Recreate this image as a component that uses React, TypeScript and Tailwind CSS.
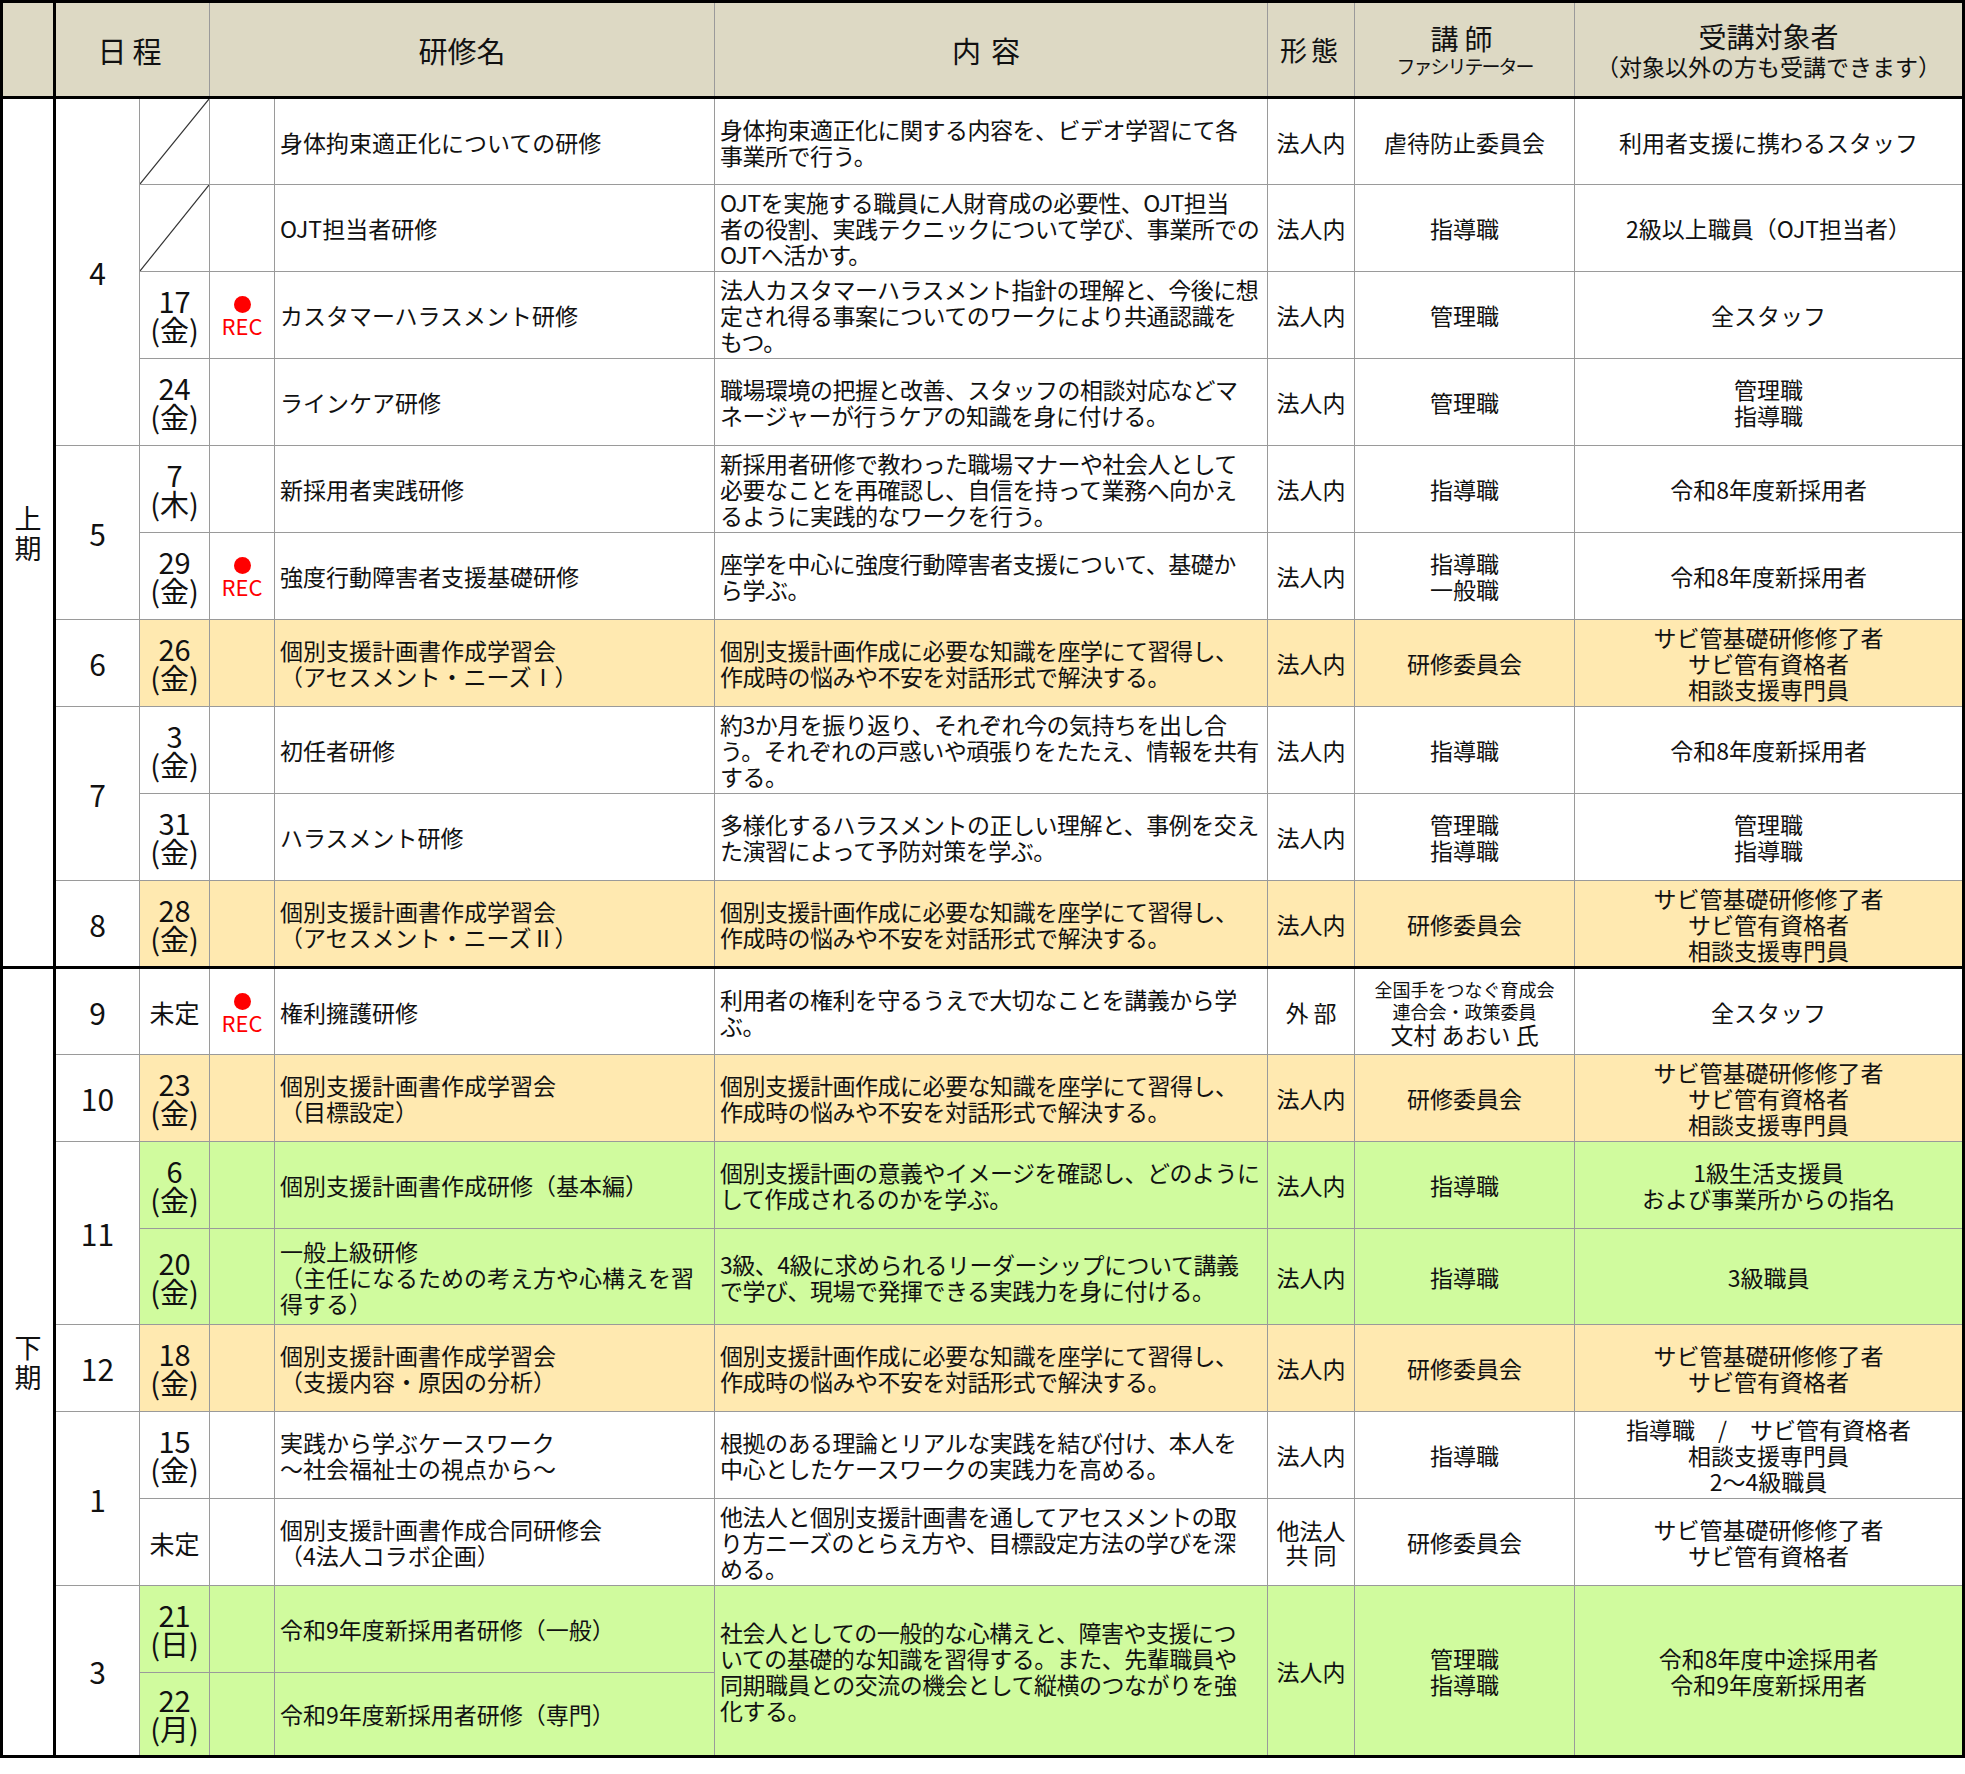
type Row = {
  month?: { label: string; span: number }
  period?: { label: string; span: number }
  date?: string[] | "diag"
  rec?: boolean
  name: string[]
  content?: { lines: string[]; span?: number }
  type?: string[]
  teacher?: React.ReactNode
  target?: string[]
  bg?: "y" | "g"
  h: number
  split?: boolean
}

const STUDY = ["個別支援計画作成に必要な知識を座学にて習得し、", "作成時の悩みや不安を対話形式で解決する。"]
const SABI3 = ["サビ管基礎研修修了者", "サビ管有資格者", "相談支援専門員"]

const rows: Row[] = [
  { period: { label: "上期", span: 10 }, month: { label: "4", span: 4 }, date: "diag", name: ["身体拘束適正化についての研修"], content: { lines: ["身体拘束適正化に関する内容を、ビデオ学習にて各", "事業所で行う。"] }, type: ["法人内"], teacher: "虐待防止委員会", target: ["利用者支援に携わるスタッフ"], h: 87 },
  { date: "diag", name: ["OJT担当者研修"], content: { lines: ["OJTを実施する職員に人財育成の必要性、OJT担当", "者の役割、実践テクニックについて学び、事業所での", "OJTへ活かす。"] }, type: ["法人内"], teacher: "指導職", target: ["2級以上職員（OJT担当者）"], h: 87 },
  { date: ["17", "(金)"], rec: true, name: ["カスタマーハラスメント研修"], content: { lines: ["法人カスタマーハラスメント指針の理解と、今後に想", "定され得る事案についてのワークにより共通認識を", "もつ。"] }, type: ["法人内"], teacher: "管理職", target: ["全スタッフ"], h: 87 },
  { date: ["24", "(金)"], name: ["ラインケア研修"], content: { lines: ["職場環境の把握と改善、スタッフの相談対応などマ", "ネージャーが行うケアの知識を身に付ける。"] }, type: ["法人内"], teacher: "管理職", target: ["管理職", "指導職"], h: 87 },
  { month: { label: "5", span: 2 }, date: ["7", "(木)"], name: ["新採用者実践研修"], content: { lines: ["新採用者研修で教わった職場マナーや社会人として", "必要なことを再確認し、自信を持って業務へ向かえ", "るように実践的なワークを行う。"] }, type: ["法人内"], teacher: "指導職", target: ["令和8年度新採用者"], h: 87 },
  { date: ["29", "(金)"], rec: true, name: ["強度行動障害者支援基礎研修"], content: { lines: ["座学を中心に強度行動障害者支援について、基礎か", "ら学ぶ。"] }, type: ["法人内"], teacher: <>指導職<br />一般職</>, target: ["令和8年度新採用者"], h: 87 },
  { month: { label: "6", span: 1 }, date: ["26", "(金)"], bg: "y", name: ["個別支援計画書作成学習会", "（アセスメント・ニーズⅠ）"], content: { lines: STUDY }, type: ["法人内"], teacher: "研修委員会", target: SABI3, h: 87 },
  { month: { label: "7", span: 2 }, date: ["3", "(金)"], name: ["初任者研修"], content: { lines: ["約3か月を振り返り、それぞれ今の気持ちを出し合", "う。それぞれの戸惑いや頑張りをたたえ、情報を共有", "する。"] }, type: ["法人内"], teacher: "指導職", target: ["令和8年度新採用者"], h: 87 },
  { date: ["31", "(金)"], name: ["ハラスメント研修"], content: { lines: ["多様化するハラスメントの正しい理解と、事例を交え", "た演習によって予防対策を学ぶ。"] }, type: ["法人内"], teacher: <>管理職<br />指導職</>, target: ["管理職", "指導職"], h: 87 },
  { month: { label: "8", span: 1 }, date: ["28", "(金)"], bg: "y", name: ["個別支援計画書作成学習会", "（アセスメント・ニーズⅡ）"], content: { lines: STUDY }, type: ["法人内"], teacher: "研修委員会", target: SABI3, h: 87 },
  { split: true, period: { label: "下期", span: 9 }, month: { label: "9", span: 1 }, date: ["未定"], rec: true, name: ["権利擁護研修"], content: { lines: ["利用者の権利を守るうえで大切なことを講義から学", "ぶ。"] }, type: ["外 部"], teacher: <><span className="text-[18px] leading-[22px] block">全国手をつなぐ育成会</span><span className="text-[18px] leading-[22px] block">連合会・政策委員</span><span className="block leading-[24px]">文村 あおい 氏</span></>, target: ["全スタッフ"], h: 87 },
  { month: { label: "10", span: 1 }, date: ["23", "(金)"], bg: "y", name: ["個別支援計画書作成学習会", "（目標設定）"], content: { lines: STUDY }, type: ["法人内"], teacher: "研修委員会", target: SABI3, h: 87 },
  { month: { label: "11", span: 2 }, date: ["6", "(金)"], bg: "g", name: ["個別支援計画書作成研修（基本編）"], content: { lines: ["個別支援計画の意義やイメージを確認し、どのように", "して作成されるのかを学ぶ。"] }, type: ["法人内"], teacher: "指導職", target: ["1級生活支援員", "および事業所からの指名"], h: 87 },
  { date: ["20", "(金)"], bg: "g", name: ["一般上級研修", "（主任になるための考え方や心構えを習", "得する）"], content: { lines: ["3級、4級に求められるリーダーシップについて講義", "で学び、現場で発揮できる実践力を身に付ける。"] }, type: ["法人内"], teacher: "指導職", target: ["3級職員"], h: 96 },
  { month: { label: "12", span: 1 }, date: ["18", "(金)"], bg: "y", name: ["個別支援計画書作成学習会", "（支援内容・原因の分析）"], content: { lines: STUDY }, type: ["法人内"], teacher: "研修委員会", target: ["サビ管基礎研修修了者", "サビ管有資格者"], h: 87 },
  { month: { label: "1", span: 2 }, date: ["15", "(金)"], name: ["実践から学ぶケースワーク", "～社会福祉士の視点から～"], content: { lines: ["根拠のある理論とリアルな実践を結び付け、本人を", "中心としたケースワークの実践力を高める。"] }, type: ["法人内"], teacher: "指導職", target: ["指導職　/　サビ管有資格者", "相談支援専門員", "2～4級職員"], h: 87 },
  { date: ["未定"], name: ["個別支援計画書作成合同研修会", "（4法人コラボ企画）"], content: { lines: ["他法人と個別支援計画書を通してアセスメントの取", "り方ニーズのとらえ方や、目標設定方法の学びを深", "める。"] }, type: ["他法人", "共 同"], teacher: "研修委員会", target: ["サビ管基礎研修修了者", "サビ管有資格者"], h: 87 },
  { month: { label: "3", span: 2 }, date: ["21", "(日)"], bg: "g", name: ["令和9年度新採用者研修（一般）"], content: { lines: ["社会人としての一般的な心構えと、障害や支援につ", "いての基礎的な知識を習得する。また、先輩職員や", "同期職員との交流の機会として縦横のつながりを強", "化する。"], span: 2 }, type: ["法人内"], teacher: <>管理職<br />指導職</>, target: ["令和8年度中途採用者", "令和9年度新採用者"], h: 87 },
  { date: ["22", "(月)"], bg: "g", name: ["令和9年度新採用者研修（専門）"], h: 84 },
]

const cell = "border border-[#9a9a9a] align-middle"

export default function App() {
  return (
    <div className="w-[1965px] h-[1774px] overflow-hidden bg-white text-[#111]" style={{ fontFamily: '"Noto Sans CJK JP", "Noto Sans", sans-serif' }}>
      <table className="w-[1965px] table-fixed border-collapse border-[3px] border-black text-[23px] leading-[26px]">
        <colgroup>
          <col className="w-[53px]" />
          <col className="w-[85px]" />
          <col className="w-[70px]" />
          <col className="w-[65px]" />
          <col className="w-[440px]" />
          <col className="w-[553px]" />
          <col className="w-[87px]" />
          <col className="w-[220px]" />
          <col />
        </colgroup>
        <thead>
          <tr className="h-[96px] bg-[#ddd9c4] text-center">
            <th className={`${cell} border-r-[3px] border-r-black border-b-[3px] border-b-black`} />
            <th colSpan={2} className={`${cell} border-b-[3px] border-b-black font-normal text-[29px] tracking-[6px]`}>日程</th>
            <th colSpan={2} className={`${cell} border-b-[3px] border-b-black font-normal text-[29px]`}>研修名</th>
            <th className={`${cell} border-b-[3px] border-b-black font-normal text-[29px] tracking-[10px]`}>内容</th>
            <th className={`${cell} border-b-[3px] border-b-black font-normal text-[27px] tracking-[4px]`}>形態</th>
            <th className={`${cell} border-b-[3px] border-b-black font-normal`}>
              <div className="text-[28px] leading-[32px] tracking-[6px]">講師</div>
              <div className="text-[19px] leading-[24px] tracking-[-2px]">ファシリテーター</div>
            </th>
            <th className={`${cell} border-b-[3px] border-b-black font-normal`}>
              <div className="text-[28px] leading-[32px]">受講対象者</div>
              <div className="text-[23px] leading-[28px]">（対象以外の方も受講できます）</div>
            </th>
          </tr>
        </thead>
        <tbody>
          {rows.map((r, i) => {
            const bg = r.bg === "y" ? "bg-[#ffe9b0]" : r.bg === "g" ? "bg-[#d0fb9e]" : ""
            const top = r.split ? "border-t-[3px] border-t-black" : ""
            return (
              <tr key={i} style={{ height: r.h }}>
                {r.period && (
                  <td rowSpan={r.period.span} className={`${cell} ${top} border-r-[3px] border-r-black text-center text-[27px] leading-[30px]`}>
                    {r.period.label.split("").map((c) => <div key={c}>{c}</div>)}
                  </td>
                )}
                {r.month && (
                  <td rowSpan={r.month.span} className={`${cell} ${top} text-center text-[30px]`}>{r.month.label}</td>
                )}
                <td className={`${cell} ${top} ${bg} relative text-center text-[29px] leading-[29px]`}>
                  {r.date === "diag" ? (
                    <svg className="absolute inset-0 w-full h-full" viewBox="0 0 100 100" preserveAspectRatio="none">
                      <line x1="0" y1="100" x2="100" y2="0" stroke="#333" strokeWidth="1.2" vectorEffect="non-scaling-stroke" />
                    </svg>
                  ) : r.date?.length === 1 ? (
                    <span className="text-[25px]">{r.date[0]}</span>
                  ) : (
                    r.date?.map((d) => <div key={d} className="whitespace-nowrap">{d}</div>)
                  )}
                </td>
                <td className={`${cell} ${top} ${bg} text-center`}>
                  {r.rec && (
                    <div className="flex flex-col items-center pt-1">
                      <span className="w-[17px] h-[17px] rounded-full bg-[#ff0000]" />
                      <span className="text-[#ff0000] text-[22px] leading-[25px]">REC</span>
                    </div>
                  )}
                </td>
                <td className={`${cell} ${top} ${bg} px-[5px]`}>
                  {r.name.map((l) => <div key={l} className="whitespace-nowrap">{l}</div>)}
                </td>
                {r.content && (
                  <td rowSpan={r.content.span} className={`${cell} ${top} ${bg} px-[5px] tracking-[-0.5px]`}>
                    {r.content.lines.map((l) => <div key={l} className="whitespace-nowrap">{l}</div>)}
                  </td>
                )}
                {r.type && (
                  <td rowSpan={r.content?.span} className={`${cell} ${top} ${bg} text-center leading-[24px]`}>
                    {r.type.map((l) => <div key={l}>{l}</div>)}
                  </td>
                )}
                {r.teacher && (
                  <td rowSpan={r.content?.span} className={`${cell} ${top} ${bg} text-center leading-[26px]`}>{r.teacher}</td>
                )}
                {r.target && (
                  <td rowSpan={r.content?.span} className={`${cell} ${top} ${bg} text-center leading-[26px]`}>
                    {r.target.map((l) => <div key={l} className="whitespace-nowrap">{l}</div>)}
                  </td>
                )}
              </tr>
            )
          })}
        </tbody>
      </table>
    </div>
  )
}
